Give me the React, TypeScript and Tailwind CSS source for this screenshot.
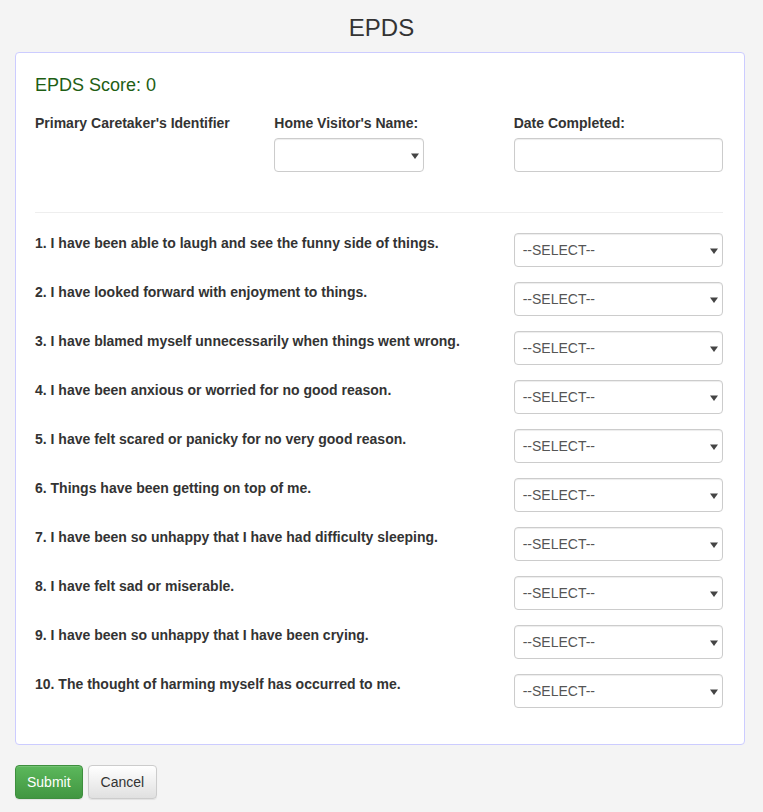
const questions = [
  '1. I have been able to laugh and see the funny side of things.',
  '2. I have looked forward with enjoyment to things.',
  '3. I have blamed myself unnecessarily when things went wrong.',
  '4. I have been anxious or worried for no good reason.',
  '5. I have felt scared or panicky for no very good reason.',
  '6. Things have been getting on top of me.',
  '7. I have been so unhappy that I have had difficulty sleeping.',
  '8. I have felt sad or miserable.',
  '9. I have been so unhappy that I have been crying.',
  '10. The thought of harming myself has occurred to me.',
];

function FakeSelect({ text, className = '' }: { text?: string; className?: string }) {
  return (
    <div
      className={`h-[34px] rounded-[4px] border border-[#ccc] bg-white flex items-center pl-[8px] pr-[4px] text-[14px] text-[#555] shadow-[inset_0_1px_1px_rgba(0,0,0,0.075)] ${className}`}
    >
      <span className="flex-1">{text}</span>
      <svg width="8" height="6" viewBox="0 0 8 6" className="mt-[1px]">
        <path d="M0 0.5 L8 0.5 L4 6 Z" fill="#444" />
      </svg>
    </div>
  );
}

export default function App() {
  return (
    <div className="min-h-[812px] bg-[#f4f4f4] px-[15px] pt-[14px] font-['Liberation_Sans',Arial,sans-serif] text-[14px] text-[#333]">
      <h1 className="text-center text-[24px] leading-[30px] text-[#333] mb-[8px] -mt-[1px] pb-[1px]">EPDS</h1>

      <div className="w-[730px] bg-white border border-[#ccf] rounded-[4px] pl-[19px] pr-[21px] pt-[21px] pb-[36px]">
        <h4 className="text-[18px] leading-[20px] text-[#1e5e14] mt-[1px]">EPDS Score: 0</h4>

        <div className="grid grid-cols-3 gap-x-[30px] mt-[18px]">
          <div>
            <label className="block font-bold leading-[20px]">Primary Caretaker's Identifier</label>
          </div>
          <div>
            <label className="block font-bold leading-[20px] mb-[5px]">Home Visitor's Name:</label>
            <FakeSelect className="w-[150px]" />
          </div>
          <div>
            <label className="block font-bold leading-[20px] mb-[5px]">Date Completed:</label>
            <div className="h-[34px] rounded-[4px] border border-[#ccc] bg-white shadow-[inset_0_1px_1px_rgba(0,0,0,0.075)]" />
          </div>
        </div>

        <hr className="border-t border-[#eee] mt-[40px] mb-[20px]" />

        <div className="flex flex-col gap-[15px]">
          {questions.map((q) => (
            <div key={q} className="grid grid-cols-3 gap-x-[30px]">
              <label className="col-span-2 font-bold leading-[20px]">{q}</label>
              <FakeSelect text="--SELECT--" />
            </div>
          ))}
        </div>
      </div>

      <div className="flex gap-[5px] mt-[20px]">
        <button className="h-[34px] px-[11px] rounded-[4px] border border-[#3e8f3e] bg-gradient-to-b from-[#5cb85c] to-[#419641] text-white text-[14px] shadow-[inset_0_1px_0_rgba(255,255,255,0.15),0_1px_1px_rgba(0,0,0,0.075)]">
          Submit
        </button>
        <button className="h-[34px] px-[12px] rounded-[4px] border border-[#ccc] bg-gradient-to-b from-white to-[#e0e0e0] text-[#333] text-[14px] shadow-[0_1px_1px_rgba(0,0,0,0.075)]">
          Cancel
        </button>
      </div>
    </div>
  );
}
